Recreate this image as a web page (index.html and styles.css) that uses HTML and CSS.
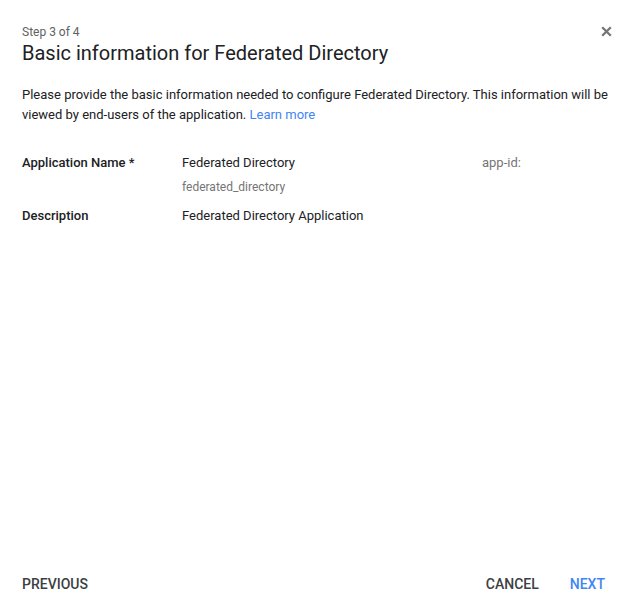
FILE: index.html
```html
<!DOCTYPE html>
<html>
<head>
<meta charset="utf-8">
<link rel="stylesheet" href="styles.css">
</head>
<body>
<div class="dialog">
  <div class="header">
    <div class="titles">
      <div class="step">Step 3 of 4</div>
      <h1 class="title">Basic information for Federated Directory</h1>
    </div>
    <button class="close" aria-label="Close">
      <svg width="11" height="11" viewBox="0 0 11 11"><path d="M1.2 1.2L9.8 9.8M9.8 1.2L1.2 9.8" stroke="#757575" stroke-width="2.3" fill="none"/></svg>
    </button>
  </div>
  <p class="intro">Please provide the basic information needed to configure Federated Directory. This information will be viewed by end-users of the application. <a class="link" href="#">Learn more</a></p>
  <div class="fields">
    <div class="row">
      <div class="label">Application Name *</div>
      <div class="value">
        <div>Federated Directory</div>
        <div class="sub">federated_directory</div>
      </div>
      <div class="appid">app-id:</div>
    </div>
    <div class="row">
      <div class="label">Description</div>
      <div class="value">Federated Directory Application</div>
    </div>
  </div>
  <div class="spacer"></div>
  <div class="footer">
    <button class="btn">PREVIOUS</button>
    <div class="right">
      <button class="btn">CANCEL</button>
      <button class="btn primary">NEXT</button>
    </div>
  </div>
</div>
</body>
</html>
```
FILE: styles.css
```css
html, body {
  margin: 0;
  padding: 0;
  background: #fff;
}
body {
  font-family: Roboto, "Noto Sans", sans-serif;
  color: #212121;
}
.dialog {
  width: 633px;
  height: 615px;
  box-sizing: border-box;
  padding: 24px 22px 0 22px;
  display: flex;
  flex-direction: column;
}
.header {
  display: flex;
  justify-content: space-between;
  align-items: flex-start;
}
.step {
  font-size: 12px;
  color: #616161;
  line-height: 16px;
}
.title {
  margin: 0;
  font-size: 20px;
  font-weight: 400;
  line-height: 26px;
  color: #202124;
}
.close {
  border: 0;
  background: none;
  padding: 0;
  margin: 0 -2px 0 0;
  width: 14px;
  height: 14px;
  display: flex;
  align-items: center;
  justify-content: center;
}
.intro {
  margin: 19px 0 0 0;
  font-size: 13px;
  line-height: 20px;
  color: #202124;
}
.link {
  color: #4285f4;
  text-decoration: none;
}
.fields {
  margin-top: 28px;
  font-size: 13px;
  display: flex;
  flex-direction: column;
  gap: 11px;
}
.row {
  display: flex;
  line-height: 20px;
}
.label {
  width: 160px;
  font-weight: 500;
  color: #202124;
}
.value {
  width: 300px;
  color: #202124;
}
.sub {
  font-size: 12px;
  color: #757575;
  margin-top: 6px;
  line-height: 16px;
}
.appid {
  font-size: 13px;
  color: #757575;
}
.spacer {
  flex: 1;
}
.footer {
  display: flex;
  justify-content: space-between;
  align-items: center;
  height: 62px;
  margin-right: 6px;
}
.right {
  display: flex;
  gap: 31px;
}
.btn {
  border: 0;
  background: none;
  padding: 0;
  font-family: Roboto, "Noto Sans", sans-serif;
  font-size: 14px;
  font-weight: 500;
  color: #3c4043;
  letter-spacing: 0;
}
.btn.primary {
  color: #4285f4;
}
```
